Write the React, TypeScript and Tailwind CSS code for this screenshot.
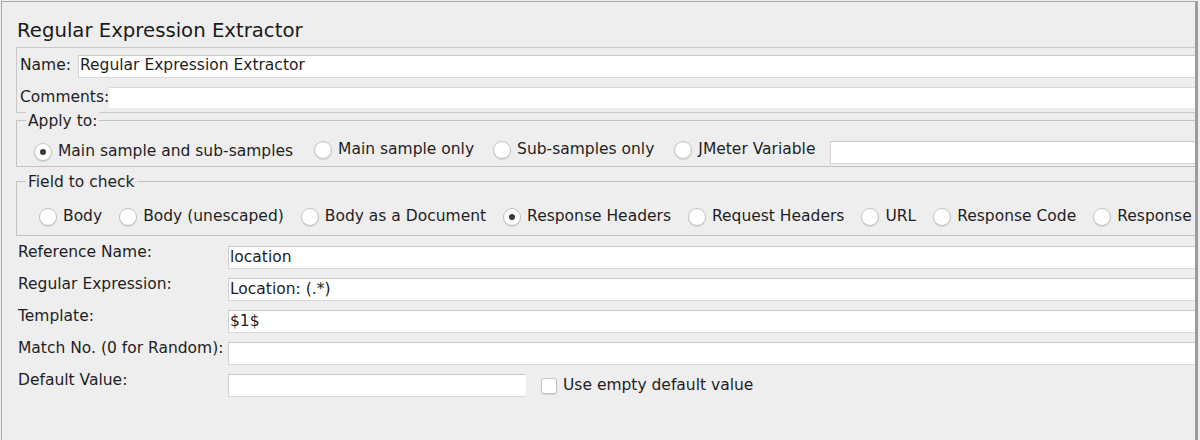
import React from "react";

const font = { fontFamily: '"DejaVu Sans", "Noto Sans", sans-serif' };

function Radio({ checked }: { checked?: boolean }) {
  return (
    <span className="inline-flex items-center justify-center w-[18px] h-[18px] rounded-full bg-white border border-[#c4c4c4] shadow-[0_1px_1px_rgba(0,0,0,0.12)] shrink-0">
      {checked && <span className="w-[6px] h-[6px] rounded-full bg-[#3a3a3a]" />}
    </span>
  );
}

function RadioItem({ label, checked }: { label: string; checked?: boolean }) {
  return (
    <span className="inline-flex items-center gap-[6px] shrink-0 whitespace-nowrap">
      <Radio checked={checked} />
      <span>{label}</span>
    </span>
  );
}

function Field({ value, className }: { value?: string; className?: string }) {
  return (
    <div
      className={
        "h-[23px] bg-white border-t border-[#c9c9c9] border-b border-b-[#d8d8d8] border-l border-l-[#d0d0d0] flex items-center pl-[1px] shrink-0 " +
        (className ?? "")
      }
    >
      {value}
    </div>
  );
}

function Row({ label, value, last }: { label: string; value?: string; last?: boolean }) {
  return (
    <div className="flex items-start h-[32px]">
      <div className="w-[226px] pl-[16px] shrink-0 leading-[18px] -mt-[3px] whitespace-nowrap">{label}</div>
      {last ? (
        <div className="flex items-center">
          <Field className="w-[298px]" />
          <span className="inline-flex items-center ml-[15px] gap-[6px] whitespace-nowrap">
            <span className="w-[16px] h-[16px] rounded-[3px] bg-white border border-[#c4c4c4] shadow-[0_1px_1px_rgba(0,0,0,0.1)]" />
            <span>Use empty default value</span>
          </span>
        </div>
      ) : (
        <Field value={value} className="flex-1" />
      )}
    </div>
  );
}

export default function App() {
  return (
    <div className="w-[1200px] h-[440px] bg-[#eeeeee] text-[15.5px] text-[#1e1e1e] overflow-hidden" style={font}>
      <div className="ml-[1px] mt-[1px] h-[439px] w-[1197px] border-t border-l border-r-[3px] border-r-[#9c9c9c] border-[#a8a8a8] overflow-hidden relative">
        <div className="h-[45px] pl-[15px] pt-[16px] text-[19.7px] leading-[26px] text-[#1a1a1a] whitespace-nowrap">
          Regular Expression Extractor
        </div>
        {/* Name panel */}
        <div className="ml-[14px] border border-[#c8c8c8] border-r-0 pt-[6px] pb-[4px]">
          <div className="flex items-center h-[24px]">
            <span className="pl-[3px] w-[61px] shrink-0">Name:</span>
            <Field value="Regular Expression Extractor" className="flex-1" />
          </div>
          <div className="flex items-center h-[21px] mt-[9px]">
            <span className="pl-[3px] w-[92px] shrink-0 whitespace-nowrap">Comments:</span>
            <div className="flex-1 h-[21px] bg-white border-t border-[#d8d8d8]" />
          </div>
        </div>
        {/* Apply to */}
        <div className="ml-[14px] mt-[7px] relative border border-[#c2c2c2] border-r-0 h-[47px]">
          <span className="absolute -top-[9px] left-[9px] bg-[#eeeeee] px-[2px] leading-[18px]">Apply to:</span>
          <div className="flex items-center h-full pt-[17px] pl-[17px] whitespace-nowrap">
            <RadioItem label="Main sample and sub-samples" checked />
            <span className="ml-[21px] shrink-0"><RadioItem label="Main sample only" /></span>
            <span className="ml-[19px] shrink-0"><RadioItem label="Sub-samples only" /></span>
            <span className="ml-[20px] shrink-0"><RadioItem label="JMeter Variable" /></span>
            <Field className="flex-1 ml-[15px] shrink" />
          </div>
        </div>
        {/* Field to check */}
        <div className="ml-[14px] mt-[14px] relative border border-[#c2c2c2] border-r-0 h-[55px]">
          <span className="absolute -top-[9px] left-[9px] bg-[#eeeeee] px-[2px] leading-[18px]">Field to check</span>
          <div className="flex items-center h-full pt-[16px] pl-[22px] gap-[17px] whitespace-nowrap">
            <RadioItem label="Body" />
            <RadioItem label="Body (unescaped)" />
            <RadioItem label="Body as a Document" />
            <RadioItem label="Response Headers" checked />
            <RadioItem label="Request Headers" />
            <RadioItem label="URL" />
            <RadioItem label="Response Code" />
            <RadioItem label="Response Message" />
          </div>
        </div>
        <div className="mt-[10px]">
          <Row label="Reference Name:" value="location" />
          <Row label="Regular Expression:" value="Location: (.*)" />
          <Row label="Template:" value="$1$" />
          <Row label="Match No. (0 for Random):" />
          <Row label="Default Value:" last />
        </div>
      </div>
    </div>
  );
}
